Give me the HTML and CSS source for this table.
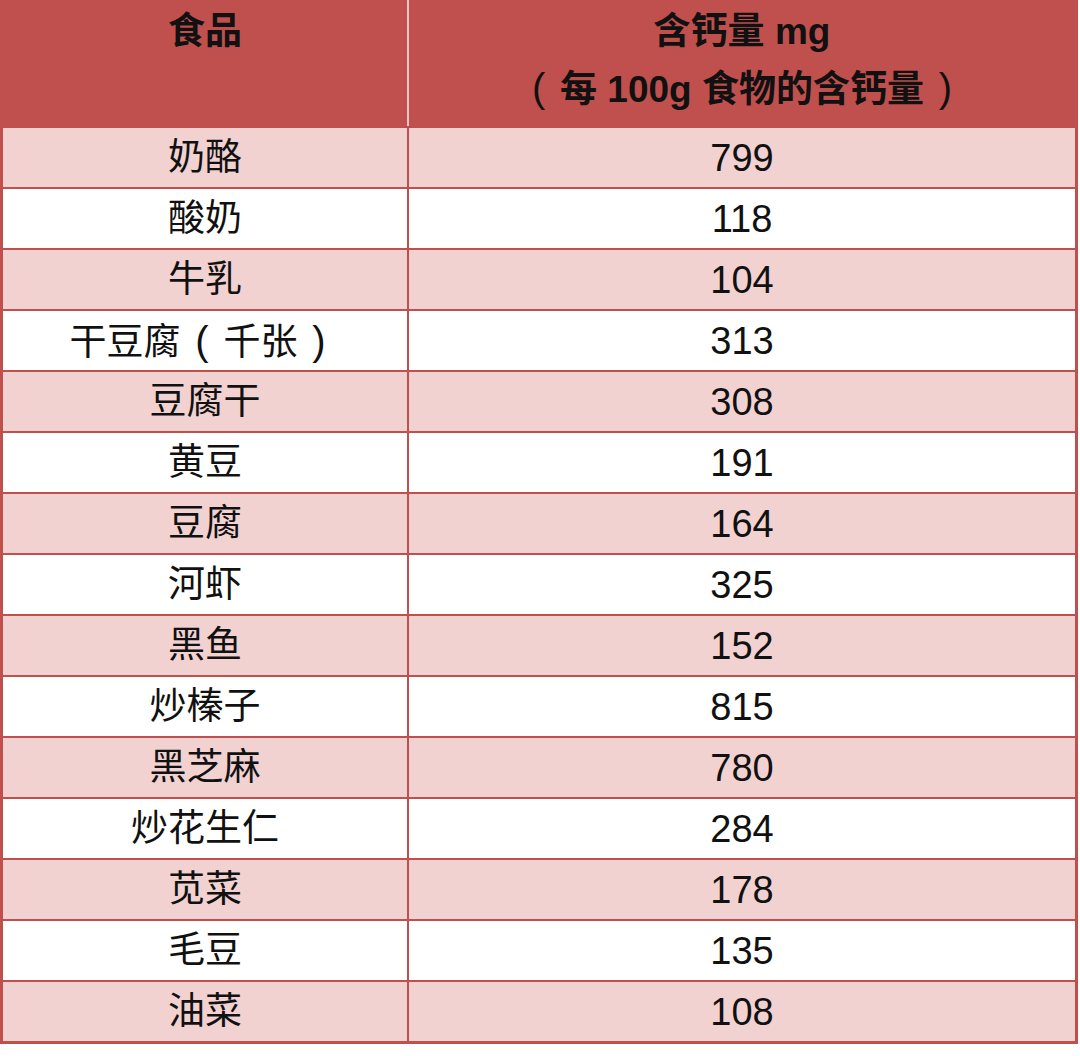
FILE: index.html
```html
<!DOCTYPE html>
<html lang="zh-CN">
<head>
<meta charset="utf-8">
<title>含钙量表</title>
<link rel="stylesheet" href="styles.css">
</head>
<body>
<div class="table">
  <div class="head">
    <div class="hcell hleft">食品</div>
    <div class="hcell">含钙量 mg<br><span class="paren">(</span>每 100g 食物的含钙量<span class="paren">)</span></div>
  </div>
  <div class="row pink"><div class="cell left">奶酪</div><div class="cell num">799</div></div>
  <div class="row"><div class="cell left">酸奶</div><div class="cell num">118</div></div>
  <div class="row pink"><div class="cell left">牛乳</div><div class="cell num">104</div></div>
  <div class="row"><div class="cell left"><span>干豆腐<span class="paren">(</span>千张<span class="paren">)</span></span></div><div class="cell num">313</div></div>
  <div class="row pink"><div class="cell left">豆腐干</div><div class="cell num">308</div></div>
  <div class="row"><div class="cell left">黄豆</div><div class="cell num">191</div></div>
  <div class="row pink"><div class="cell left">豆腐</div><div class="cell num">164</div></div>
  <div class="row"><div class="cell left">河虾</div><div class="cell num">325</div></div>
  <div class="row pink"><div class="cell left">黑鱼</div><div class="cell num">152</div></div>
  <div class="row"><div class="cell left">炒榛子</div><div class="cell num">815</div></div>
  <div class="row pink"><div class="cell left">黑芝麻</div><div class="cell num">780</div></div>
  <div class="row"><div class="cell left">炒花生仁</div><div class="cell num">284</div></div>
  <div class="row pink"><div class="cell left">苋菜</div><div class="cell num">178</div></div>
  <div class="row"><div class="cell left">毛豆</div><div class="cell num">135</div></div>
  <div class="row pink"><div class="cell left">油菜</div><div class="cell num">108</div></div>
</div>
</body>
</html>
```
FILE: styles.css
```css
html, body {
  margin: 0;
  padding: 0;
  background: #ffffff;
}
body {
  font-family: "Liberation Sans", "Noto Sans CJK SC", sans-serif;
  color: #111111;
}
.table {
  width: 1078px;
  box-sizing: border-box;
  border-left: 3px solid #c0504d;
  border-right: 3px solid #c0504d;
  border-bottom: 3px solid #c0504d;
}
.head {
  display: grid;
  grid-template-columns: 406px 1fr;
  height: 126px;
  background: #c0504d;
}
.hcell {
  font-weight: bold;
  font-size: 37px;
  line-height: 58px;
  padding-top: 3px;
  text-align: center;
}
.hleft {
  border-right: 2px solid #f0c4c3;
}
.paren {
  display: inline-block;
  width: 43px;
  text-align: center;
  font-weight: normal;
  font-size: 40px;
  line-height: 1;
}
.row {
  display: grid;
  grid-template-columns: 406px 1fr;
  height: 61px;
  box-sizing: border-box;
  border-top: 2px solid #c0504d;
  background: #ffffff;
}
.row.pink {
  background: #f2d2d1;
}
.row:first-of-type {
  border-top-color: #c85a57;
}
.cell {
  display: flex;
  align-items: center;
  justify-content: center;
  font-size: 37px;
  line-height: 1;
}
.left {
  border-right: 2px solid #c0504d;
}
.num {
  font-size: 38px;
}
```
